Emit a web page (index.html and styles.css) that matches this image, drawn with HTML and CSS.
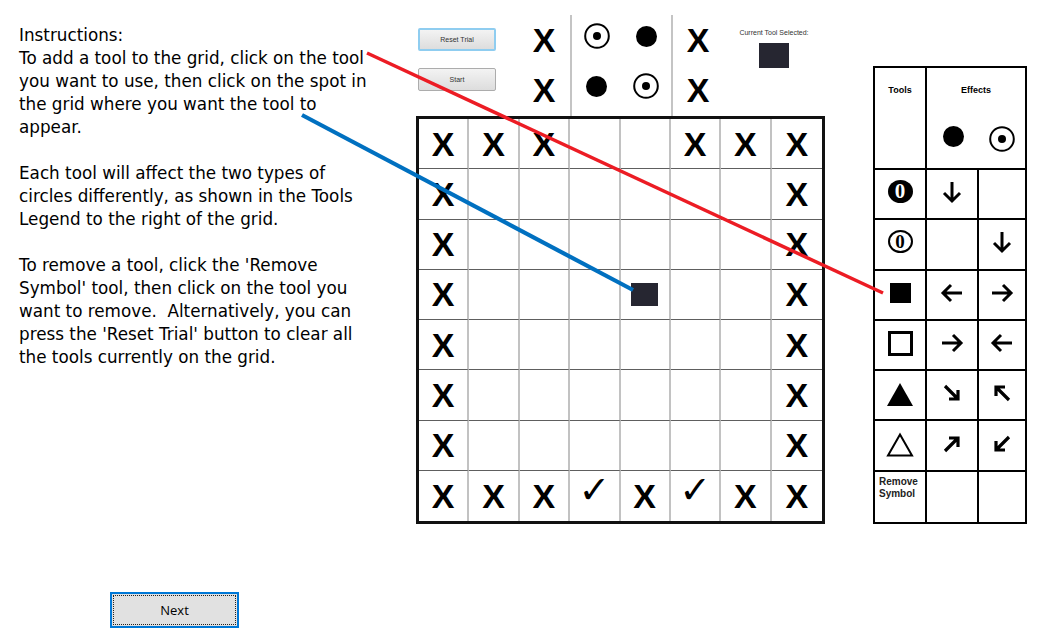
FILE: index.html
```html
<!DOCTYPE html>
<html>
<head>
<meta charset="utf-8">
<link rel="stylesheet" href="styles.css">
</head>
<body>
<div class="page">
  <div class="left">
    <div class="instructions">
      <p>Instructions:<br>To add a tool to the grid, click on the tool<br>you want to use, then click on the spot in<br>the grid where you want the tool to<br>appear.</p>
      <p>Each tool will affect the two types of<br>circles differently, as shown in the Tools<br>Legend to the right of the grid.</p>
      <p>To remove a tool, click the 'Remove<br>Symbol' tool, then click on the tool you<br>want to remove.&nbsp; Alternatively, you can<br>press the 'Reset Trial' button to clear all<br>the tools currently on the grid.</p>
    </div>
    <button class="next">Next</button>
  </div>

  <div class="center">
    <div class="top">
      <div class="btns">
        <button class="btn btn-focus">Reset Trial</button>
        <button class="btn">Start</button>
      </div>
      <div class="symcol">
        <div class="sym"><span class="x">X</span></div>
        <div class="sym"><span class="x">X</span></div>
      </div>
      <div class="symcol sep">
        <div class="sym up"><svg class="ring" viewBox="0 0 26 26"><circle cx="13" cy="13" r="11.8" fill="none" stroke="#000" stroke-width="2"/><circle cx="13" cy="13" r="4" fill="#000"/></svg></div>
        <div class="sym up"><span class="dot"></span></div>
      </div>
      <div class="symcol">
        <div class="sym up"><span class="dot"></span></div>
        <div class="sym up"><svg class="ring" viewBox="0 0 26 26"><circle cx="13" cy="13" r="11.8" fill="none" stroke="#000" stroke-width="2"/><circle cx="13" cy="13" r="4" fill="#000"/></svg></div>
      </div>
      <div class="symcol sep">
        <div class="sym"><span class="x">X</span></div>
        <div class="sym"><span class="x">X</span></div>
      </div>
      <div class="current">
        <div class="cur-label">Current Tool Selected:</div>
        <div class="cur-box"></div>
      </div>
    </div>

    <div class="grid">
      <div class="cell"><span class="x">X</span></div><div class="cell"><span class="x">X</span></div><div class="cell"><span class="x">X</span></div><div class="cell"></div><div class="cell"></div><div class="cell"><span class="x">X</span></div><div class="cell"><span class="x">X</span></div><div class="cell"><span class="x">X</span></div>
      <div class="cell"><span class="x">X</span></div><div class="cell"></div><div class="cell"></div><div class="cell"></div><div class="cell"></div><div class="cell"></div><div class="cell"></div><div class="cell"><span class="x">X</span></div>
      <div class="cell"><span class="x">X</span></div><div class="cell"></div><div class="cell"></div><div class="cell"></div><div class="cell"></div><div class="cell"></div><div class="cell"></div><div class="cell"><span class="x">X</span></div>
      <div class="cell"><span class="x">X</span></div><div class="cell"></div><div class="cell"></div><div class="cell"></div><div class="cell"><span class="placed"></span></div><div class="cell"></div><div class="cell"></div><div class="cell"><span class="x">X</span></div>
      <div class="cell"><span class="x">X</span></div><div class="cell"></div><div class="cell"></div><div class="cell"></div><div class="cell"></div><div class="cell"></div><div class="cell"></div><div class="cell"><span class="x">X</span></div>
      <div class="cell"><span class="x">X</span></div><div class="cell"></div><div class="cell"></div><div class="cell"></div><div class="cell"></div><div class="cell"></div><div class="cell"></div><div class="cell"><span class="x">X</span></div>
      <div class="cell"><span class="x">X</span></div><div class="cell"></div><div class="cell"></div><div class="cell"></div><div class="cell"></div><div class="cell"></div><div class="cell"></div><div class="cell"><span class="x">X</span></div>
      <div class="cell"><span class="x">X</span></div><div class="cell"><span class="x">X</span></div><div class="cell"><span class="x">X</span></div><div class="cell"><span class="check">✓</span></div><div class="cell"><span class="x">X</span></div><div class="cell"><span class="check">✓</span></div><div class="cell"><span class="x">X</span></div><div class="cell"><span class="x">X</span></div>
    </div>
  </div>

  <div class="legend">
    <div class="lc lh-tools">Tools</div>
    <div class="lc lh-effects">
      <div class="lh-label">Effects</div>
      <div class="lh-sym"><span class="dot"></span></div>
      <div class="lh-sym"><svg class="ring" viewBox="0 0 26 26"><circle cx="13" cy="13" r="11.8" fill="none" stroke="#000" stroke-width="2"/><circle cx="13" cy="13" r="4" fill="#000"/></svg></div>
    </div>

    <div class="lc"><span class="neg0">0</span></div>
    <div class="lc"><svg class="arr rot90" viewBox="0 0 26 26"><path d="M3 13 H22 M14 5 L22 13 L14 21"/></svg></div>
    <div class="lc lr"></div>

    <div class="lc"><span class="pos0">0</span></div>
    <div class="lc"></div>
    <div class="lc lr"><svg class="arr rot90" viewBox="0 0 26 26"><path d="M3 13 H22 M14 5 L22 13 L14 21"/></svg></div>

    <div class="lc"><span class="sq-fill"></span></div>
    <div class="lc"><svg class="arr rot180" viewBox="0 0 26 26"><path d="M3 13 H22 M14 5 L22 13 L14 21"/></svg></div>
    <div class="lc lr"><svg class="arr" viewBox="0 0 26 26"><path d="M3 13 H22 M14 5 L22 13 L14 21"/></svg></div>

    <div class="lc"><span class="sq-open"></span></div>
    <div class="lc"><svg class="arr" viewBox="0 0 26 26"><path d="M3 13 H22 M14 5 L22 13 L14 21"/></svg></div>
    <div class="lc lr"><svg class="arr rot180" viewBox="0 0 26 26"><path d="M3 13 H22 M14 5 L22 13 L14 21"/></svg></div>

    <div class="lc"><svg class="tri" viewBox="0 0 28 25"><path d="M14 1 L27 24 H1 Z" fill="#000"/></svg></div>
    <div class="lc"><svg class="darr" viewBox="0 0 20 20"><path d="M3 3 L16 16 M16 7 V16 H7"/></svg></div>
    <div class="lc lr"><svg class="darr rot180" viewBox="0 0 20 20"><path d="M3 3 L16 16 M16 7 V16 H7"/></svg></div>

    <div class="lc"><svg class="tri" viewBox="0 0 28 25"><path d="M14 2.5 L26 23.5 H2 Z" fill="none" stroke="#000" stroke-width="2"/></svg></div>
    <div class="lc"><svg class="darr rotm90" viewBox="0 0 20 20"><path d="M3 3 L16 16 M16 7 V16 H7"/></svg></div>
    <div class="lc lr"><svg class="darr rot90" viewBox="0 0 20 20"><path d="M3 3 L16 16 M16 7 V16 H7"/></svg></div>

    <div class="lc lb remove">Remove<br>Symbol</div>
    <div class="lc lb"></div>
    <div class="lc lb lr"></div>
  </div>

  <svg class="overlay" width="1060" height="638" viewBox="0 0 1060 638">
    <line x1="367" y1="53" x2="883" y2="293" stroke="#ec1c24" stroke-width="3.5"/>
    <line x1="302" y1="115" x2="633" y2="290" stroke="#0070c0" stroke-width="4.2"/>
  </svg>
</div>
</body>
</html>
```

FILE: styles.css
```css
* { box-sizing: border-box; margin: 0; padding: 0; }
html, body { width: 1060px; height: 638px; background: #fff; overflow: hidden; }
body { font-family: "DejaVu Sans", sans-serif; color: #000; }

.page { position: relative; display: flex; width: 1060px; height: 638px; }

/* left column */
.left { width: 416px; flex: none; display: flex; flex-direction: column; justify-content: space-between; padding: 24px 0 10px 19px; }
.instructions { font-family: "DejaVu Sans", sans-serif; font-size: 16.8px; line-height: 23px; white-space: nowrap; }
.instructions p + p { margin-top: 23px; }
.next { align-self: flex-start; margin-left: 91px; width: 129px; height: 36px; background: #e1e1e1; border: 2px solid #0078d7; outline: 1px dotted #222; outline-offset: -4px; font-family: "Open Sans", sans-serif; font-size: 13px; color: #000; }

/* center */
.center { width: 409px; flex: none; padding-top: 15px; }
.top { display: grid; grid-template-columns: 102px 52px 51px 50px 52px 102px; height: 101px; }
.btns { display: flex; flex-direction: column; align-items: flex-start; gap: 17px; padding: 13px 0 0 2px; }
.btn { width: 78px; height: 23px; border: 1px solid #acacac; border-radius: 2px; background: linear-gradient(#f3f3f3, #dddddd); font-family: "Liberation Sans", sans-serif; font-size: 7px; color: #333; }
.btn-focus { border: 2px solid #8fcdf0; }
.symcol { display: flex; flex-direction: column; }
.symcol.sep { border-left: 2px solid #c4c4c4; }
.sym { height: 50px; display: flex; align-items: center; justify-content: center; }
.sym.up > * { margin-bottom: 8px; }
.x { font-family: "Liberation Sans", sans-serif; font-weight: bold; font-size: 34px; line-height: 1; }
.dot { display: block; width: 21px; height: 21px; border-radius: 50%; background: #000; }
.ring { display: block; width: 26px; height: 26px; }
.current { display: flex; flex-direction: column; align-items: center; padding-top: 14px; }
.cur-label { font-family: "Liberation Sans", sans-serif; font-size: 7px; line-height: 8px; color: #333; }
.cur-box { width: 30px; height: 25px; background: #262631; margin-top: 6px; }

/* grid */
.grid { display: grid; grid-template-columns: repeat(8, 1fr); grid-template-rows: repeat(8, 1fr); width: 409px; height: 408px; border: 3px solid #111; }
.cell { display: flex; align-items: center; justify-content: center; border-right: 2px solid #c2c2c2; border-bottom: 1px solid #5e5e5e; }
.cell:nth-child(8n) { border-right: 0; }
.cell:nth-last-child(-n+8) { border-bottom: 0; }
.check { font-family: "DejaVu Sans", sans-serif; font-size: 38px; line-height: 1; margin-bottom: 12px; }
.placed { display: block; width: 27px; height: 23px; background: #262631; }

/* legend */
.legend { flex: none; margin: 66px 0 0 48px; width: 154px; height: 458px; display: grid; grid-template-columns: 52px 52px 1fr; grid-template-rows: 102px repeat(7, 1fr); border: 2px solid #000; }
.lc { display: flex; align-items: center; justify-content: center; border-right: 2px solid #000; border-bottom: 2px solid #000; }
.lc.lr { border-right: 0; }
.lc.lb { border-bottom: 0; }
.lh-tools { align-items: flex-start; padding-top: 17px; font-family: "Liberation Sans", sans-serif; font-weight: bold; font-size: 9px; line-height: 11px; }
.lh-effects { grid-column: 2 / 4; border-right: 0; display: grid; grid-template-columns: 52px 1fr; grid-template-rows: 46px 1fr; align-items: start; }
.lh-label { grid-column: 1 / 3; text-align: center; padding-top: 17px; font-family: "Liberation Sans", sans-serif; font-weight: bold; font-size: 9px; line-height: 11px; }
.lh-sym { display: flex; justify-content: center; padding-top: 12px; }
.neg0 { display: block; width: 25px; height: 23px; border-radius: 50%; background: #000; color: #fff; font-family: "Liberation Serif", serif; font-weight: bold; font-size: 21px; line-height: 23px; text-align: center; margin-bottom: 5px; }
.pos0 { display: block; width: 25px; height: 23px; border-radius: 50%; border: 2px solid #000; color: #000; font-family: "Liberation Serif", serif; font-weight: bold; font-size: 19px; line-height: 19px; text-align: center; margin-bottom: 5px; }
.sq-fill { display: block; width: 21px; height: 20px; background: #000; margin-bottom: 3px; }
.sq-open { display: block; width: 25px; height: 25px; border: 3.5px solid #000; margin-bottom: 3px; }
.tri { display: block; width: 28px; height: 25px; margin-bottom: 2px; }
.arr { display: block; width: 26px; height: 26px; fill: none; stroke: #000; stroke-width: 3; margin-bottom: 4px; }
.darr { display: block; width: 20px; height: 20px; fill: none; stroke: #000; stroke-width: 3.2; margin-bottom: 4px; }
.rot90 { transform: rotate(90deg); }
.rot180 { transform: rotate(180deg); }
.rotm90 { transform: rotate(-90deg); }
.remove { align-items: flex-start; justify-content: flex-start; padding: 4px 0 0 4px; font-family: "Liberation Sans", sans-serif; font-weight: bold; font-size: 10px; line-height: 12px; color: #222; }

.overlay { position: absolute; left: 0; top: 0; pointer-events: none; }
```
